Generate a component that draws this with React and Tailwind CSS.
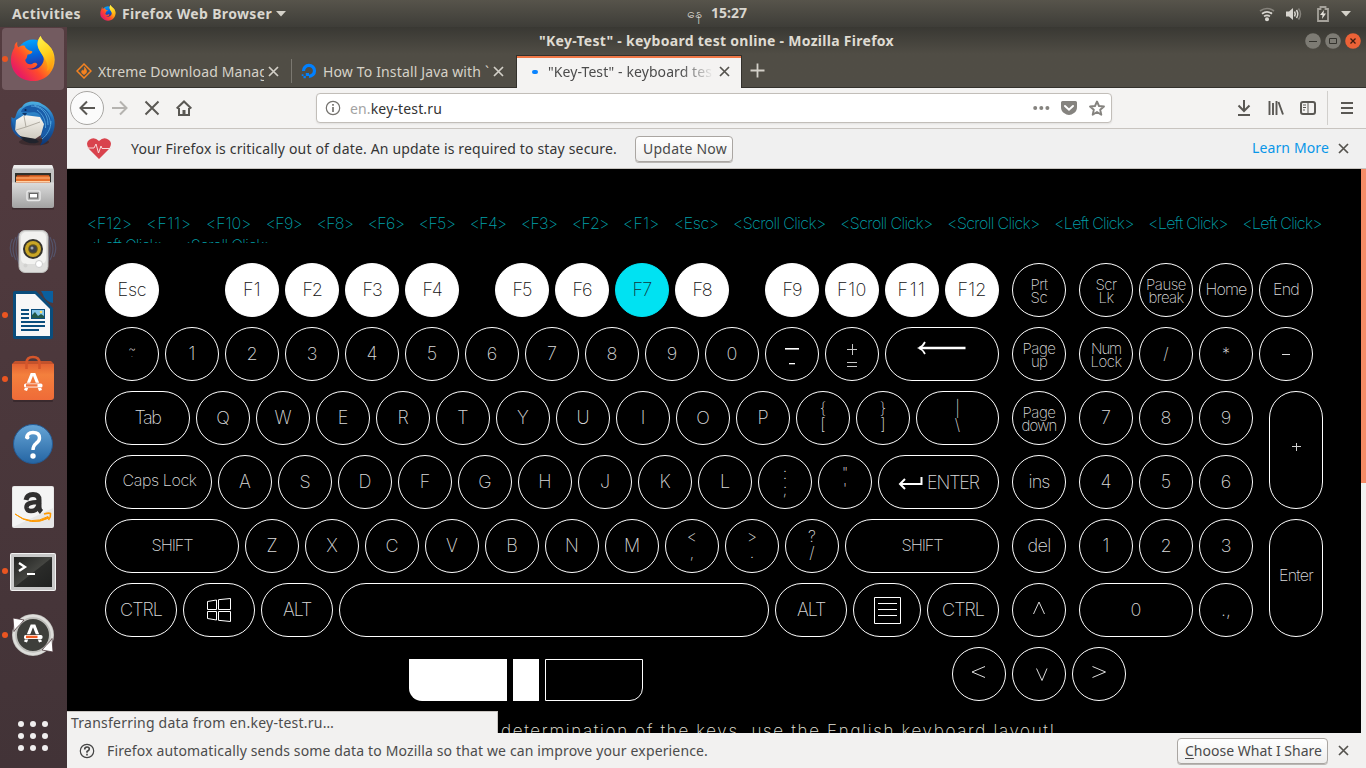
import React, { useLayoutEffect, useRef } from "react";

/* Text whose tracking is adjusted so that it fills a given width. */
function Fit({ w, className = "", children }) {
  const ref = useRef(null);
  useLayoutEffect(() => {
    const el = ref.current;
    el.style.letterSpacing = "0px";
    const natural = el.getBoundingClientRect().width;
    const n = el.textContent.length;
    el.style.letterSpacing = `${(w - natural) / Math.max(1, n)}px`;
  }, [w]);
  return (
    <span ref={ref} className={`inline-block shrink-0 whitespace-nowrap ${className}`}>
      {children}
    </span>
  );
}

const KEY = "flex shrink-0 items-center justify-center rounded-[27px] border ";
const PLAIN = "border-white bg-black text-[#dadada] ";
const USED = "border-white bg-white text-[#101010] ";
const HELD = "border-[#00e2f2] bg-[#00e2f2] text-[#10383c] ";

function Key({ label, size = "w-[54px] h-[54px]", tone = PLAIN, w, font = "text-[18px]", shift = "", children }) {
  return (
    <div className={KEY + tone + size}>
      {children || (w ? <Fit w={w} className={`${font} leading-5 ${shift}`}>{label}</Fit> : <span className={`${font} leading-5 ${shift}`}>{label}</span>)}
    </div>
  );
}

function Pair({ a, b, wa, wb, size }) {
  return (
    <Key size={size}>
      <div className="flex flex-col items-center pt-px text-[15px] leading-[13px]">
        <Fit w={wa}>{a}</Fit>
        <Fit w={wb}>{b}</Fit>
      </div>
    </Key>
  );
}

function Stack({ a, b, size, shift = "" }) {
  return (
    <Key size={size}>
      <div className={`flex flex-col items-center text-[16px] leading-4 ${shift}`}>
        <span>{a}</span>
        <span>{b}</span>
      </div>
    </Key>
  );
}

const Letters = ({ s }) => s.split("").map((c) => <Key key={c} label={c} />);
const Row = ({ children }) => <div className="flex h-[54px] gap-[6px]">{children}</div>;

function Keyboard() {
  return (
    <div className="flex h-[438px] pl-[38px]">
      <div className="flex w-[894px] flex-col gap-[10px]">
        <Row>
          <Key label="Esc" w={29} tone={USED} />
          <div className="w-[54px]" />
          <Key label="F1" w={18} tone={USED} />
          <Key label="F2" w={19} tone={USED} />
          <Key label="F3" w={19} tone={USED} />
          <Key label="F4" w={19} tone={USED} />
          <div className="w-[24px]" />
          <Key label="F5" w={19} tone={USED} />
          <Key label="F6" w={19} tone={USED} />
          <Key label="F7" w={19} tone={HELD} />
          <Key label="F8" w={19} tone={USED} />
          <div className="w-[24px]" />
          <Key label="F9" w={19} tone={USED} />
          <Key label="F10" w={30} tone={USED} />
          <Key label="F11" w={29} tone={USED} />
          <Key label="F12" w={29} tone={USED} />
        </Row>
        <Row>
          <Key>
            <div className="flex h-[22px] flex-col items-center">
              <span className="text-[12px] leading-[12px]">~</span>
              <span className="text-[8px] leading-[8px]">`</span>
            </div>
          </Key>
          <Letters s="1234567890" />
          <Key>
            <svg width="20" height="24" viewBox="0 0 20 24" fill="#fff">
              <rect x="3" y="6" width="14" height="1.6" />
              <rect x="7" y="21" width="6" height="1.3" />
            </svg>
          </Key>
          <Key>
            <svg width="20" height="30" viewBox="0 0 20 30" stroke="#c8c8c8" fill="none">
              <path d="M5 10.5H15M10.5 5V16M5 23.5H15M5 27.5H15" />
            </svg>
          </Key>
          <Key size="w-[114px] h-[54px]">
            <svg width="50" height="26" viewBox="0 0 50 26" fill="none" stroke="#fff">
              <path d="M2 7H48.500" strokeWidth="2.400" />
              <path d="M8 1C6.500 4 4.500 6 2 7C4.500 8 6.500 10 8 13" strokeWidth="1.700" />
            </svg>
          </Key>
        </Row>
        <Row>
          <Key label="Tab" w={26} size="w-[85px] h-[54px]" />
          <Letters s="QWERTYUIOP" />
          <Stack a="{" b="[" shift="-translate-y-[2px]" />
          <Stack a="}" b="]" shift="-translate-y-[2px]" />
          <Stack a="|" b="\" size="w-[83px] h-[54px]" shift="-translate-y-[2px]" />
        </Row>
        <Row>
          <Key label="Caps Lock" w={74} font="text-[16px]" size="w-[107px] h-[54px]" shift="-translate-y-[2px] translate-x-px" />
          <Letters s="ASDFGHJKL" />
          <Stack a=":" b=";" shift="-translate-y-px" />
          <Stack a={'"'} b="'" shift="-translate-y-px" />
          <Key size="w-[121px] h-[54px]">
            <div className="flex items-center gap-1">
              <svg width="25" height="20" viewBox="0 0 25 20" fill="none" stroke="#fff" strokeWidth="2">
                <path d="M2 12H23.500V5M7 7L2 12L7 17" />
              </svg>
              <Fit w={52} className="text-[18px]">ENTER</Fit>
            </div>
          </Key>
        </Row>
        <Row>
          <Key label="SHIFT" w={41} font="text-[16.500px]" size="w-[134px] h-[54px]" shift="-translate-y-px" />
          <Letters s="ZXCVBNM" />
          <Stack a="<" b="," shift="-translate-y-[2px]" />
          <Stack a=">" b="." shift="-translate-y-[2px]" />
          <Stack a="?" b="/" shift="-translate-y-[2px]" />
          <Key label="SHIFT" w={41} font="text-[16.500px]" size="w-[154px] h-[54px]" shift="-translate-y-px" />
        </Row>
        <Row>
          <Key label="CTRL" w={42} size="w-[72px] h-[54px]" />
          <Key size="w-[72px] h-[54px]">
            <svg width="26" height="26" viewBox="0 0 26 26" fill="none" stroke="#fff">
              <path d="M1.500 4.500L10.500 3V12.500H1.500ZM12.500 2.700L24.500 1.500V12.500H12.500ZM1.500 14.500H10.500V23L1.500 21.500ZM12.500 14.500H24.500V24.500L12.500 23.300Z" />
            </svg>
          </Key>
          <Key label="ALT" w={28} size="w-[72px] h-[54px]" />
          <div className="h-[54px] w-[430px] shrink-0 rounded-[27px] border border-white" />
          <Key label="ALT" w={28} size="w-[72px] h-[54px]" />
          <Key size="w-[68px] h-[54px]">
            <svg width="27" height="27" viewBox="0 0 27 27" fill="none" stroke="#fff">
              <path d="M.5.5H26.500V26.500H.5ZM4 6.500H23M4 12.500H23M4 18.500H23" />
            </svg>
          </Key>
          <Key label="CTRL" w={42} size="w-[72px] h-[54px]" />
        </Row>
        <div className="flex h-[54px] pt-3 pl-[304px]">
          <div className="h-[42px] w-[98px] rounded-bl-[13px] bg-white" />
          <div className="ml-[6px] h-[42px] w-[26px] bg-white" />
          <div className="ml-[6px] h-[42px] w-[98px] rounded-br-[13px] border border-white" />
        </div>
      </div>
      <div className="ml-[13px] flex w-[54px] flex-col gap-[10px]">
        <Pair a="Prt" b="Sc" wa={17} wb={17} />
        <Pair a="Page" b="up" wa={33} wb={16} />
        <Pair a="Page" b="down" wa={33} wb={35} />
        <Key label="ins" w={21} />
        <Key label="del" w={23} />
        <Key>
          <svg width="14" height="18" viewBox="0 0 14 18" fill="none" stroke="#d8d8d8"><path d="M1.500 13L7 1L12.500 13" /></svg>
        </Key>
        <div className="-ml-[60px] flex w-[174px] gap-[6px]">
          <Key>
            <svg width="16" height="16" viewBox="0 0 16 16" fill="none" stroke="#e0e0e0"><path d="M14 .5L1 6L14 11.500" /></svg>
          </Key>
          <Key>
            <svg width="17" height="14" viewBox="0 0 17 14" fill="none" stroke="#d8d8d8"><path d="M5.500 1.500L11 13.500L16 1.500" /></svg>
          </Key>
          <Key>
            <svg width="16" height="16" viewBox="0 0 16 16" fill="none" stroke="#e0e0e0"><path d="M1.500 .5L14.500 6L1.500 11.500" /></svg>
          </Key>
        </div>
      </div>
      <div className="ml-[13px] flex flex-col gap-[10px]">
        <Row>
          <Pair a="Scr" b="Lk" wa={21} wb={15} />
          <Pair a="Pause" b="break" wa={40} wb={35} />
          <Key label="Home" w={41} font="text-[16px]" shift="-translate-y-px" />
          <Key label="End" w={26} font="text-[16px]" shift="-translate-y-px" />
        </Row>
        <Row>
          <Pair a="Num" b="Lock" wa={30} wb={31} />
          <Key label="/" font="text-[16px]" shift="-translate-y-px" />
          <Key label="*" font="text-[16px]" shift="-translate-y-px" />
          <Key><span className="h-px w-2 bg-[#dcdcdc]" /></Key>
        </Row>
        <div className="flex gap-4">
          <div className="flex w-[174px] flex-col gap-[10px]">
            <Row><Letters s="789" /></Row>
            <Row><Letters s="456" /></Row>
            <Row><Letters s="123" /></Row>
            <Row>
              <Key label="0" size="w-[114px] h-[54px]" />
              <Key label=".," />
            </Row>
          </div>
          <div className="flex w-[54px] flex-col gap-[10px]">
            <Key size="w-[54px] h-[118px]">
              <svg width="11" height="15" viewBox="0 0 11 15" stroke="#d0d0d0"><path d="M1 3.500H10M5.500 -1V8" /></svg>
            </Key>
            <Key label="Enter" w={34} font="text-[16px]" size="w-[54px] h-[118px]" shift="-translate-y-[3px]" />
          </div>
        </div>
      </div>
    </div>
  );
}

const LOG = [
  ["<F12>", 45], ["<F11>", 45], ["<F10>", 45], ["<F9>", 36.500], ["<F8>", 36.500], ["<F6>", 36.500], ["<F5>", 36.500],
  ["<F4>", 36.500], ["<F3>", 36.500], ["<F2>", 36.500], ["<F1>", 36.500], ["<Esc>", 44.500], ["<Scroll Click>", 92.500],
  ["<Scroll Click>", 92.500], ["<Scroll Click>", 92.500], ["<Left Click>", 79.500], ["<Left Click>", 79.500], ["<Left Click>", 79.500],
];

function Page() {
  return (
    <div className="relative flex h-[564px]">
      <div className="h-[564px] w-[1294px] overflow-hidden bg-black font-[Inter,'Liberation_Sans',sans-serif] font-extralight">
        <div className="pt-[44px]">
          <div className="h-[30px] overflow-hidden pl-5 text-[16px] text-[#00a0aa]">
            <div className="flex h-5 gap-[14.550px] leading-5">
              {LOG.map(([t, w], i) => <Fit key={i} w={w}>{t}</Fit>)}
            </div>
            <div className="mt-[2px] flex h-5 gap-[14.500px] leading-5">
              <Fit w={79.500}>&lt;Left Click&gt;</Fit>
              <Fit w={92.500}>&lt;Scroll Click&gt;</Fit>
            </div>
          </div>
        </div>
        <div className="pt-5"><Keyboard /></div>
        <div className="mt-[20px] pl-[434px] text-[17px] leading-5 text-[#e4e4dc]">
          <Fit w={555}>determination of the keys, use the English keyboard layout!</Fit>
        </div>
      </div>
      <div className="w-[5px] bg-[#f2f1f0]"><div className="h-[314px] bg-[#f58c68]" /></div>
      <div className="absolute bottom-0 left-0 flex h-[22px] w-[431px] items-center border-t border-r border-[#c9c5c1] bg-[#f2f1f0] pl-1 text-[14px] text-[#4c4c4c]">
        <Fit w={263}>Transferring data from en.key-test.ru…</Fit>
      </div>
    </div>
  );
}

const Close = ({ c = "#55534e", s = 11 }) => (
  <svg width={s} height={s} viewBox="0 0 11 11" stroke={c} strokeWidth="1.700" fill="none"><path d="M1 1L10 10M10 1L1 10" /></svg>
);

function Firefox({ size, id }) {
  return (
    <svg width={size} height={size} viewBox="0 0 46 47">
      <defs>
        <linearGradient id={`${id}a`} x1=".85" y1=".15" x2=".15" y2=".8">
          <stop offset="0" stopColor="#ffdf2e" /><stop offset=".35" stopColor="#ff9a13" /><stop offset=".65" stopColor="#ff4a2c" /><stop offset="1" stopColor="#e81d62" />
        </linearGradient>
        <linearGradient id={`${id}b`} x1=".4" y1="0" x2=".6" y2="1">
          <stop offset="0" stopColor="#02a5ff" /><stop offset=".5" stopColor="#0562d8" /><stop offset="1" stopColor="#3a1e88" />
        </linearGradient>
        <linearGradient id={`${id}c`} x1=".3" y1="0" x2=".6" y2="1">
          <stop offset="0" stopColor="#fff14a" /><stop offset=".5" stopColor="#ffd21e" /><stop offset="1" stopColor="#ff980e" />
        </linearGradient>
      </defs>
      <circle cx="23" cy="20" r="16.500" fill={`url(#${id}b)`} />
      <path d="M7 6C6.500 8.500 7 10 8 11.500C10 10 12.500 9.500 14.500 10C15.500 13 18 15 22 15.500C23 17 21.500 18.500 17.500 19C16.500 22 17 23 15 24.500C16 28.500 19 29.500 22 28.500C24 27 26.500 27 27.500 29C25.500 33 20 34 16.500 33C25 36.500 33 32 34 24C34 20 31 17 29 13C26 8 28 3 31 0C31.500 4 36 6 39 9.500C47 17 47 30 40 38.500C31 49 14 48 5.500 38.500C-2 30 0 18 4 12C4 9 5 7 7 6Z" fill={`url(#${id}a)`} />
      <path d="M31 0C31.500 5 38 8 41.500 13C47 23 44 31 37 36C40 29 35 23 31 17C27 12 26.500 5 31 0Z" fill={`url(#${id}c)`} />
    </svg>
  );
}

const Thunderbird = () => (
  <svg width="48" height="48" viewBox="0 0 48 48">
    <defs>
      <linearGradient id="tb" x1="0" y1="0" x2="0" y2="1"><stop offset="0" stopColor="#4db0e2" /><stop offset=".4" stopColor="#1f6fba" /><stop offset="1" stopColor="#0b3576" /></linearGradient>
      <linearGradient id="tm2" x1="0" y1="0" x2="0" y2="1"><stop offset="0" stopColor="#f8f6f1" /><stop offset="1" stopColor="#cfcabf" /></linearGradient>
    </defs>
    <ellipse cx="25" cy="43" rx="15" ry="3.500" fill="#000" opacity=".25" />
    <path d="M13 8C16 2 27 1 33 5C42 9 47 18 45.500 28C44 38 38 44 31 46.500C34 42 34 38 31 35L12 38C6 35 1 27 2.500 18C5 20 6 20 7 16C8 12 10 9.500 13 8Z" fill="url(#tb)" />
    <path d="M7 21L15 16L31 18L35 25L32 36L26 40L14 39L6 33Z" fill="url(#tm2)" />
    <path d="M15 17L17 28L31 23M7 31L17 28" fill="none" stroke="#a9a59b" strokeWidth=".9" />
    <path d="M10 37L27 40L30 43C24 46 15 44 10 37Z" fill="#20232c" />
    <path d="M12 13C20 15 26 11 31 16C37 23 36 31 31 39C39 36 44 28 42 19C39 10 31 5 22 6C17 7 13 9 12 13Z" fill="#195ca8" />
    <path d="M22 7C32 7 39 14 39 26M25 6C36 9 41 16 41.500 25M28 11C34 15 37 22 36.500 29M42 22C42 30 38 36 33 40" fill="none" stroke="#5aaee3" strokeWidth=".8" />
    <path d="M2.500 19C3.500 28 7 34 14 40C8 38 2.500 33 2 25Z" fill="#1a549c" />
    <path d="M13 14L16 17L18 14Z" fill="#0d3568" />
    <circle cx="16.500" cy="11" r="1.100" fill="#0a2450" />
  </svg>
);

const Files = () => (
  <svg width="48" height="48" viewBox="0 0 48 48">
    <defs><linearGradient id="fl" x1="0" y1="0" x2="0" y2="1"><stop offset="0" stopColor="#dcdcdc" /><stop offset="1" stopColor="#a2a2a2" /></linearGradient></defs>
    <rect x="3" y="44" width="42" height="2.500" fill="#2a1b20" opacity=".5" />
    <path d="M5 2H43L45 7V22H3V7Z" fill="#c4c4c4" /><path d="M5 2H43L44.500 5.500H3.500Z" fill="#ececec" />
    <rect x="6" y="10" width="36" height="9.500" fill="#30302c" />
    <path d="M8 12H40V15H8Z" fill="#9c3f18" /><path d="M7 13.500H20L21 12.500H40L41 14V20H7Z" fill="#e5702c" /><path d="M7 15H41" stroke="#ffb27c" /><path d="M7 18.500H41" stroke="#ffd0a4" />
    <path d="M3 19.500H45V43Q45 45 43 45H5Q3 45 3 43Z" fill="url(#fl)" />
    <rect x="18" y="28" width="13" height="9.500" rx="1.500" fill="#a8a8a8" stroke="#e8e8e8" strokeWidth="1.500" />
    <rect x="20.500" y="30.500" width="8" height="4.500" fill="#fff" stroke="#666" />
  </svg>
);

const Rhythm = () => (
  <svg width="50" height="48" viewBox="0 0 50 48">
    <path d="M8 10Q2 22 8 33M11 6Q5 20 11 37M42 10Q48 22 42 33M39 6Q45 20 39 37M4.500 12Q0 21 4.500 30M45.500 12Q50 21 45.500 30" fill="none" stroke="#5d7aad" strokeWidth="1.200" opacity=".4" />
    <rect x="11" y="3.500" width="29" height="42" rx="6" fill="#dededc" stroke="#bdbdbb" />
    <rect x="13" y="5" width="25" height="32" rx="5" fill="#f2f2f0" />
    <circle cx="25" cy="22" r="10" fill="#34332e" /><circle cx="25" cy="22" r="8" fill="#c8a526" /><circle cx="25" cy="22" r="4.800" fill="#6d5b16" /><circle cx="25" cy="22" r="3.800" fill="#3e4045" /><circle cx="24" cy="21" r="1.500" fill="#9fa4ac" />
    <circle cx="31" cy="37" r="3.500" fill="#fff" stroke="#ccc" /><circle cx="17.500" cy="38.500" r="2" fill="#d2d2d0" />
  </svg>
);

const Writer = () => (
  <svg width="42" height="48" viewBox="0 0 42 48">
    <path d="M3 0H24L41 17V46Q41 48 39 48H3Q1 48 1 46V2Q1 0 3 0Z" fill="#0a4d7c" />
    <path d="M29 0H41V12Q35 11 32 6Q31 3 29 0Z" fill="#0a5f9e" />
    <path d="M4 3H23L38 18V45H4Z" fill="#f7f7f7" />
    <path d="M9 19H17M9 23H17M9 27H17M9 31H33M9 35H33M9 39H27" stroke="#0a4d7c" strokeWidth="2" />
    <rect x="19" y="18" width="14" height="10" fill="#0a4d7c" /><rect x="20" y="19" width="12" height="8" fill="#83c5e8" />
    <path d="M20 27V24L23 21L26 25L29 23L32 25V27Z" fill="#225848" /><circle cx="29" cy="21" r="1.300" fill="#ffdb61" />
  </svg>
);

/* A triangular emblem crossed by a horizontal pencil bar. */
const Emblem = ({ bar, edge }) => (
  <>
    <path d="M1.500 17.500L7.800 1.500H10.200L16.500 17.500" fill="none" stroke="#fff" strokeWidth="3.200" />
    <rect x="-.5" y="9.800" width="19.500" height="5.200" rx="2" fill={edge} />
    <rect x="0" y="10.400" width="18.500" height="4" rx="1.500" fill="#fff" /><rect x="2" y="11.200" width="11.500" height="2.400" fill={bar} />
  </>
);

const Software = () => (
  <svg width="48" height="48" viewBox="0 0 48 48">
    <defs><linearGradient id="sw" x1="0" y1="0" x2="0" y2="1"><stop offset="0" stopColor="#e36232" /><stop offset=".3" stopColor="#f4803d" /><stop offset="1" stopColor="#ef6b38" /></linearGradient></defs>
    <rect x="4" y="43" width="40" height="4" rx="1" fill="#2a1b20" opacity=".5" />
    <path d="M3 9H45V42Q45 45 42 45H6Q3 45 3 42Z" fill="url(#sw)" /><path d="M3 9L6 6H42L45 9Z" fill="#c3522c" />
    <path d="M17.500 14V8Q17.500 2 24 2Q30.500 2 30.500 8V14" fill="none" stroke="#d5562b" strokeWidth="2.500" />
    <g transform="translate(15 18)"><Emblem bar="#f2743e" edge="#f07039" /></g>
  </svg>
);

const Help = () => (
  <svg width="44" height="44" viewBox="0 0 44 44">
    <defs><linearGradient id="hp" x1="0" y1="0" x2="0" y2="1"><stop offset="0" stopColor="#66a5d6" /><stop offset="1" stopColor="#2565a3" /></linearGradient></defs>
    <circle cx="22" cy="23" r="19.500" fill="url(#hp)" stroke="#245a93" />
    <path d="M15.500 17.500Q16 11.500 22 11.500Q28.500 11.500 28.500 17Q28.500 20 25 22.500Q22 25 22 29" fill="none" stroke="#fff" strokeWidth="3.400" /><circle cx="16.500" cy="16.500" r="2" fill="#fff" /><circle cx="22" cy="35" r="2.700" fill="#fff" />
  </svg>
);

const Amazon = () => (
  <svg width="42" height="42" viewBox="0 0 42 42">
    <rect width="42" height="42" rx="2" fill="#e6e6e6" /><path d="M1 1H41V22L1 41Z" fill="#f4f4f4" />
    <path d="M14 14Q15 8.500 21 8.500Q27 8.500 27 14V21Q27 24 29.500 26" fill="none" stroke="#302f2f" strokeWidth="5" />
    <path d="M27 16Q14 16 14.500 21.500Q15 25 19 25Q26 25 27 17" fill="none" stroke="#302f2f" strokeWidth="4.500" />
    <path d="M3 28Q19 40 36 30.500L37 32Q19 41 3 28Z" fill="#ff9900" stroke="#ff9900" />
    <path d="M32 28Q37 26.500 38.500 27.500Q39 31 36.500 34" fill="none" stroke="#ff9900" strokeWidth="1.600" />
  </svg>
);

const Terminal = () => (
  <svg width="46" height="40" viewBox="0 0 46 40">
    <defs><linearGradient id="tm" x1="0" y1="0" x2="1" y2="1"><stop offset="0" stopColor="#20211f" /><stop offset=".5" stopColor="#444541" /><stop offset=".52" stopColor="#2a2b29" /><stop offset="1" stopColor="#202120" /></linearGradient></defs>
    <rect y="2" width="46" height="38" rx="2" fill="#f2f2f2" /><rect x="1" y="3" width="44" height="36" rx="1" fill="#c8c8c8" />
    <rect x="4" y="6" width="38" height="30" fill="url(#tm)" />
    <path d="M9 12L15 16L9 20" fill="none" stroke="#fff" strokeWidth="2.300" /><path d="M17 23H25" stroke="#fff" strokeWidth="2" />
  </svg>
);

const Updater = () => (
  <svg width="46" height="46" viewBox="0 0 46 46">
    <circle cx="23" cy="23" r="18.500" fill="#3e3f3b" stroke="#bdbdb9" strokeWidth="5" />
    <circle cx="23" cy="23" r="19" fill="none" stroke="#dededb" strokeWidth="2.500" />
    <path d="M3 6L14 8L10 12.500Q6 16 4 19.500Z" fill="#fff" stroke="#4b373c" strokeWidth=".8" /><path d="M43 40L32 38L36 33.500Q40 30 42 26.500Z" fill="#fff" stroke="#4b373c" strokeWidth=".8" />
    <g transform="translate(14 12.500)"><Emblem bar="#ef5b24" edge="#3e3f3b" /></g>
  </svg>
);

function Dock() {
  const items = [
    [<Firefox size={46} id="fxd" />, true], [<Thunderbird />], [<Files />], [<Rhythm />], [<Writer />, true],
    [<Software />, true], [<Help />], [<Amazon />], [<Terminal />, true], [<Updater />, true],
  ];
  return (
    <div className="flex h-[741px] w-[67px] shrink-0 flex-col bg-linear-to-b from-[#543c40] to-[#423337]">
      {items.map(([icon, open], i) => (
        <div key={i} className="flex h-16 items-center">
          <div className={`flex h-[62px] w-[62px] items-center rounded-[4px] ml-[2px] ${i === 0 ? "bg-[#735b60]" : ""}`}>
            <span className={`h-[6px] w-[6px] shrink-0 rounded-full ${open ? "bg-[#ea5521]" : ""}`} />
            <span className="flex w-[50px] shrink-0 justify-center">{icon}</span>
          </div>
        </div>
      ))}
      <div className="mt-[54px] ml-[18px] grid w-[30px] grid-cols-3 gap-[6px]">
        {Array.from({ length: 9 }, (_, i) => <span key={i} className="h-[6px] w-[6px] rounded-full bg-[#f0eeee]" />)}
      </div>
    </div>
  );
}

const Caret = ({ c = "#d4d1c9" }) => <svg width="10" height="6" viewBox="0 0 10 6" fill={c}><path d="M0 0H10L5 5.500Z" /></svg>;

function TopBar() {
  return (
    <div className="flex h-[27px] items-center bg-linear-to-b from-[#57544b] to-[#3e3d38] text-[14px] font-bold text-[#d9d6cf]">
      <div className="flex w-[560px] items-center pl-3">
        <Fit w={69}>Activities</Fit>
        <span className="-mt-px ml-[19px]"><Firefox size={16} id="fxt" /></span>
        <Fit w={150} className="ml-[6px]">Firefox Web Browser</Fit>
        <span className="ml-[4px]"><Caret /></span>
      </div>
      <div className="flex w-[690px] items-center pb-[2px] pl-[127px]">
        <span className="w-[24px] text-[14px] leading-5 font-normal">နေ</span>
        <Fit w={36}>15:27</Fit>
      </div>
      <div className="flex items-center pl-[9px]">
        <svg width="16" height="16" viewBox="0 0 16 16" fill="none" stroke="#d8d5cf" strokeWidth="1.700">
          <path d="M1 5Q8 0 15 5" stroke="#85827b" /><path d="M3 7.700Q8 4 13 7.700M5 10.400Q8 8.300 11 10.400" /><circle cx="8" cy="13.300" r="1.200" fill="#d8d5cf" />
        </svg>
        <svg className="ml-[11px]" width="16" height="14" viewBox="0 0 16 14" fill="none" stroke="#d8d5cf" strokeWidth="1.500">
          <path d="M0 4.500H3L7 1V13L3 9.500H0Z" fill="#d8d5cf" stroke="none" /><path d="M8.500 4.500Q10 7 8.500 9.500M10.500 3Q13 7 10.500 11" /><path d="M12.500 1.500Q16.500 7 12.500 12.500" stroke="#85827b" />
        </svg>
        <svg className="ml-[15px]" width="12" height="16" viewBox="0 0 12 16"><path d="M1 3H3.500V1H8.500V3H11V15H1Z" fill="none" stroke="#a5a29b" strokeWidth="1.800" /><path d="M7 4L3 9H5.500L5 13L9 7.500H6.500Z" fill="#e5e2db" /></svg>
        <span className="ml-[12px]"><Caret /></span>
      </div>
    </div>
  );
}

function WindowTop() {
  return (
    <div className="flex h-[61px] flex-col border-b border-[#33312c] bg-linear-to-b from-[#393833] from-0% to-[#504d45] to-45%">
      <div className="flex h-7 items-center">
        <div className="flex w-[1238px] justify-start pl-[472px] text-[14px] font-bold text-[#dfdbd2]">
          <Fit w={355}>"Key-Test" - keyboard test online - Mozilla Firefox</Fit>
        </div>
        <div className="flex gap-[4px]">
          <svg width="16" height="16" viewBox="0 0 16 16"><circle cx="8" cy="8" r="7.800" fill="#7d7b74" /><path d="M4 8.500H12" stroke="#34332e" /></svg>
          <svg width="16" height="16" viewBox="0 0 16 16"><circle cx="8" cy="8" r="7.800" fill="#7d7b74" /><path d="M4.500 5.500H11.500V10.500H4.500Z" stroke="#34332e" fill="none" /></svg>
          <svg width="16" height="16" viewBox="0 0 16 16"><circle cx="8" cy="8" r="7.800" fill="#ec6237" /><path d="M5.500 5.500L10.500 10.500M10.500 5.500L5.500 10.500" stroke="#3d1c10" strokeWidth="1.300" /></svg>
        </div>
      </div>
      <div className="flex h-[33px] text-[14px] text-[#d6d2c8]">
        <div className="flex w-[225px] items-center pt-px pl-[9px]">
          <svg width="16" height="16" viewBox="0 0 16 16"><path d="M8 1L15 8L8 15L1 8Z" fill="none" stroke="#f58220" strokeWidth="1.500" /><path d="M8 3.500Q12 7 10.500 10L8 12L5.500 10Q4.500 8 6.500 6.500L7 8Q9 6 8 3.500Z" fill="#f58220" /></svg>
          <div className="ml-[6px] w-[166px] overflow-hidden"><Fit w={170}>Xtreme Download Manag</Fit></div>
          <span className="ml-[4px]"><Close c="#d3d0c8" /></span>
          <span className="ml-[12px] h-[24px] w-px bg-[#7b7870]" />
        </div>
        <div className="flex w-[224px] items-center pt-px pl-[9px]">
          <svg width="16" height="16" viewBox="0 0 16 16"><path d="M8 13.300A5.500 5.500 0 1 0 2.500 8" fill="none" stroke="#0080ff" strokeWidth="3.200" /><path d="M4.800 10H8V13H4.800ZM2.500 13H4.800V15.300H2.500ZM.7 11.200H2.500V13H.7Z" fill="#0080ff" /></svg>
          <div className="ml-[6px] w-[166px]"><Fit w={166}>How To Install Java with `</Fit></div>
          <span className="ml-[4px]"><Close c="#d3d0c8" /></span>
        </div>
        <div className="-mb-px flex w-[226px] items-center border-x border-t border-x-[#33312c] border-t-[#33312c] bg-[#f4f3f2] text-[#4c4c4c] shadow-[inset_0_2px_0_#f07746]">
          <span className="ml-[15px] h-[4px] w-[6px] rounded-full bg-[#0a84ff]" />
          <div className="ml-[10px] w-[166px] overflow-hidden mask-r-from-80%"><Fit w={164}>"Key-Test" - keyboard tes</Fit></div>
          <span className="ml-[5px]"><Close /></span>
        </div>
        <div className="flex items-center pl-[8px]">
          <svg width="15" height="15" viewBox="0 0 15 15" stroke="#d3d0c8" strokeWidth="1.800"><path d="M7.500 .5V14.500M.5 7.500H14.500" /></svg>
        </div>
      </div>
    </div>
  );
}

function Toolbar() {
  const ink = { fill: "none", stroke: "#5a5854", strokeWidth: 2, width: 16, height: 16, viewBox: "0 0 16 16" };
  return (
    <div className="flex h-[41px] items-center border-b border-[#c8c4c0] bg-[#f4f3f2]">
      <div className="flex w-[249px] items-center pl-[3px]">
        <div className="flex h-[34px] w-[34px] items-center justify-center rounded-full border border-[#a8a6a3] bg-[#fbfbfb]">
          <svg {...ink}><path d="M16 8H1.500M8 1.500L1.500 8L8 14.500" /></svg>
        </div>
        <svg {...ink} className="ml-[8px]" stroke="#b5b3b0"><path d="M0 8H14.500M8 1.500L14.500 8L8 14.500" /></svg>
        <svg {...ink} className="ml-[16px]"><path d="M1.500 1.500L14.500 14.500M14.500 1.500L1.500 14.500" /></svg>
        <svg {...ink} className="ml-[16px]"><path d="M.7 8.500L8 1.500L15.300 8.500M3 8V15H13V8" /><path d="M8 15V10" strokeWidth="3" /></svg>
      </div>
      <div className="flex h-[30px] w-[796px] items-center rounded-[4px] border border-[#c2beb9] bg-white px-[8px] shadow-[0_1px_2px_rgba(0,0,0,.08)]">
        <svg width="16" height="16" viewBox="0 0 16 16" fill="none" stroke="#74726e"><circle cx="8" cy="8" r="6.700" strokeWidth="1.200" /><path d="M8 7V12M8 4V5.700" strokeWidth="1.700" /></svg>
        <Fit w={92} className="ml-[9px] text-[14px] text-[#333]"><span className="text-[#a3a3a3]">en.</span>key-test.ru</Fit>
        <svg className="ml-auto" width="17" height="16" viewBox="0 0 17 16" fill="#85837f"><circle cx="2.200" cy="8" r="2" /><circle cx="8.300" cy="8" r="2" /><circle cx="14.400" cy="8" r="2" /></svg>
        <svg className="ml-[11px]" width="16" height="16" viewBox="0 0 16 16"><path d="M1.500 1H14.500Q16 1 16 2.500V7Q16 11 13 13Q10.500 15 8 15Q5.500 15 3 13Q0 11 0 7V2.500Q0 1 1.500 1Z" fill="#85837f" /><path d="M4 6L8 9.700L12 6" fill="none" stroke="#fff" strokeWidth="2" strokeLinecap="round" /></svg>
        <svg className="mr-[-2px] ml-[12px]" width="16" height="16" viewBox="0 0 16 16"><path d="M8 1.500L10 6L15 6.500L11.200 9.800L12.300 14.700L8 12L3.700 14.700L4.800 9.800L1 6.500L6 6Z" fill="none" stroke="#85837f" strokeWidth="1.900" strokeLinejoin="round" /></svg>
      </div>
      <div className="flex items-center pl-[124px]">
        <svg {...ink}><path d="M8 0V10.500M2.500 5.500L8 11L13.500 5.500M2 15H14" /></svg>
        <svg {...ink} className="ml-[16px]"><path d="M1.500 1V15M5 3V15M8.500 1V15M10.500 2L15 14.500" strokeWidth="1.900" /></svg>
        <svg {...ink} className="ml-[16px]"><rect x="1" y="2" width="14" height="12" rx="2" /><path d="M8 2V14M3 5H6M3 7.500H6M3 10H5" strokeWidth="1" /></svg>
        <span className="ml-[11px] h-[34px] w-px bg-[#d1cfcc]" />
        <svg {...ink} className="ml-[11px]"><path d="M2 3H14M2 8H14M2 13H14" /></svg>
      </div>
    </div>
  );
}

const Button = ({ children, className }) => (
  <div className={`flex items-center justify-center rounded-[4px] border border-[#aaa6a2] bg-linear-to-b from-white to-[#efeeed] text-[14px] text-[#4a4a4a] shadow-[0_1px_0_#b9b6b3] ${className}`}>{children}</div>
);

export default function App() {
  return (
    <div className="h-[768px] w-[1366px] overflow-hidden bg-black font-['Noto_Sans','Open_Sans',sans-serif]">
      <TopBar />
      <div className="flex">
        <Dock />
        <div className="flex w-[1299px] flex-col">
          <WindowTop />
          <Toolbar />
          <div className="flex h-[40px] items-center border-b border-[#c8c4c0] bg-[#f0f0f0] text-[14px] text-[#353535]">
            <svg className="ml-5" width="24" height="22" viewBox="0 0 24 22"><path d="M12 21L2 11Q-2 5 2 2Q7-2 12 3Q17-2 22 2Q26 5 22 11Z" fill="#d9434d" /><path d="M0 10H7L9 6L11.500 15L14 8L15 10.500H24" fill="none" stroke="#f7dada" /></svg>
            <Fit w={486} className="ml-[20px]">Your Firefox is critically out of date. An update is required to stay secure.</Fit>
            <Button className="ml-[18px] h-[26px] w-[98px]"><Fit w={84} className="translate-x-px">Update Now</Fit></Button>
            <Fit w={77} className="ml-auto -translate-y-px text-[#0996e8]">Learn More</Fit>
            <span className="mr-[17px] ml-[9px]"><Close /></span>
          </div>
          <Page />
          <div className="flex h-[35px] items-center bg-[#f2f1f0] text-[14px] text-[#4c4c4c]">
            <svg className="ml-[12px]" width="16" height="16" viewBox="0 0 16 16" fill="none" stroke="#444"><circle cx="8" cy="8" r="6.700" strokeWidth="1.200" /><path d="M5.700 6.500Q5.700 4 8 4Q10.300 4 10.300 6Q10.300 7.300 8 8.500V9.700M8 10.800V12.500" strokeWidth="1.600" /></svg>
            <Fit w={601} className="ml-[12px]">Firefox automatically sends some data to Mozilla so that we can improve your experience.</Fit>
            <Button className="ml-auto h-[26px] w-[151px]"><Fit w={137} className="translate-x-px"><span className="underline underline-offset-2">C</span>hoose What I Share</Fit></Button>
            <span className="mr-[17px] ml-[10px]"><Close /></span>
          </div>
        </div>
      </div>
    </div>
  );
}
